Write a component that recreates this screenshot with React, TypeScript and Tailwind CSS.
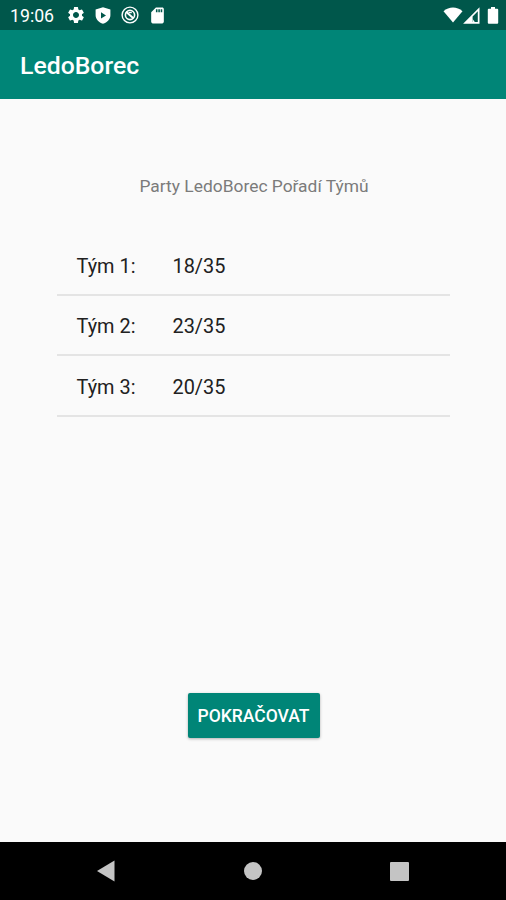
import React from 'react';
import { MdSettings, MdSdCard } from 'react-icons/md';

interface Team {
  name: string;
  score: string;
}

const teams: Team[] = [
  { name: 'Tým 1:', score: '18/35' },
  { name: 'Tým 2:', score: '23/35' },
  { name: 'Tým 3:', score: '20/35' },
];

const StatusBar: React.FC = () => (
  <div className="flex h-[30px] items-center bg-[#00574b] pl-[10px] pr-[7px] text-white">
    <span className="w-[56px] pt-px text-[17.7px] leading-[30px]">19:06</span>
    <MdSettings className="h-5 w-5" />
    <svg viewBox="0 0 16 17" className="ml-[9px] h-[17px] w-4">
      <path fill="currentColor" fillRule="evenodd" d="M8 0.3L15.4 2.6v5.6c0 3.9-3.1 7-7.4 8.6-4.3-1.6-7.4-4.7-7.4-8.6V2.6zM6 5.2v6.4l5-3.2z" />
    </svg>
    <svg viewBox="0 0 18 18" className="ml-[10px] h-[18px] w-[18px]" fill="none" stroke="currentColor">
      <circle cx="9" cy="9" r="7.9" strokeWidth="1.4" />
      <circle cx="9" cy="9" r="4.6" strokeWidth="1.6" />
      <path d="M5 5.8L12.4 12.2" strokeWidth="2" />
      <path d="M7.6 6.6h3.2" strokeWidth="1.2" />
    </svg>
    <MdSdCard className="ml-[9px] h-[19px] w-[19px]" />
    <svg viewBox="0 0 20 16" className="ml-auto h-4 w-5" fill="currentColor">
      <path d="M0.5 4.2C6 -0.6 14 -0.6 19.5 4.2L10 15.6z" />
    </svg>
    <svg viewBox="0 0 17 17" className="h-[17px] w-[17px]">
      <path fill="currentColor" fillRule="evenodd" d="M16.5 0.3v16.4H0.1zM14.8 4.2L9.6 9.6v5.3h5.2z" />
      <path fill="currentColor" d="M9.6 12l2.2 2.9H9.6z" />
    </svg>
    <svg viewBox="0 0 12 17" className="ml-[7px] h-[17px] w-3" fill="currentColor">
      <path d="M4 0h4v1.8h2.2q1 0 1 1v13q0 1-1 1H1.8q-1 0-1-1v-13q0-1 1-1H4z" />
    </svg>
  </div>
);

const NavigationBar: React.FC = () => (
  <div className="flex h-[58px] items-center justify-between bg-black pl-[97px] pr-[97px] text-[#c4c4c4]">
    <svg viewBox="0 0 18 22" className="h-[22px] w-[18px]" fill="currentColor">
      <path d="M17.5 0.5v21L0 11z" />
    </svg>
    <div className="ml-px h-[18px] w-[18px] rounded-full bg-current" />
    <div className="h-[19px] w-[19px] rounded-[1px] bg-current" />
  </div>
);

const App: React.FC = () => {
  return (
    <div className="flex h-[900px] w-[506px] flex-col overflow-hidden bg-[#fafafa] font-['Roboto',sans-serif]">
      <StatusBar />
      <header className="flex h-[69px] items-center bg-[#008577] px-5 pt-0.5">
        <h1 className="text-[24.8px] font-medium text-white">LedoBorec</h1>
      </header>

      <main className="flex flex-1 flex-col items-center">
        <p className="mt-[76px] pl-0.5 text-[17.4px] leading-[22px] text-[#7b7b7b]">Party LedoBorec Pořadí Týmů</p>

        <ul className="mt-[38px] w-[393px]">
          {teams.map(team => (
            <li
              key={team.name}
              className="flex h-[60.5px] items-center border-b-2 border-[#e4e4e4] pl-5 pt-[5px] text-[19.9px] text-[#212121]"
            >
              <span className="w-24">{team.name}</span>
              <span>{team.score}</span>
            </li>
          ))}
        </ul>

        <button
          type="button"
          className="mt-auto mb-[104px] ml-px h-[45px] w-[132px] rounded-[2px] bg-[#008577] pt-0.5 text-[17.5px] font-medium text-white shadow-[0_1px_3px_rgba(0,0,0,0.3)]"
        >
          POKRAČOVAT
        </button>
      </main>

      <NavigationBar />
    </div>
  );
};

export default App;
